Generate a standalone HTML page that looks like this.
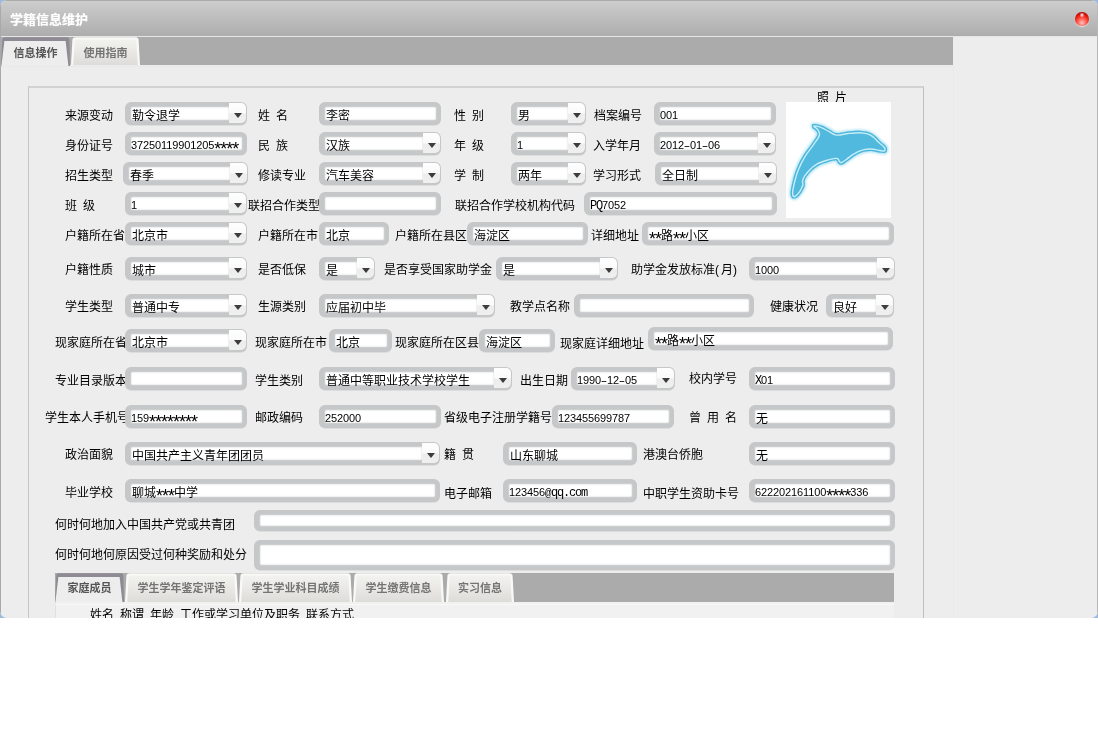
<!DOCTYPE html>
<html lang="zh-CN"><head><meta charset="utf-8"><title>学籍信息维护</title>
<style>
html,body{margin:0;padding:0;background:#fff;}
.lb,.in span,.tab span,#title .t{will-change:transform}
body{width:1098px;height:752px;position:relative;overflow:hidden;font-family:"Liberation Sans", "Noto Sans CJK SC", sans-serif;font-size:12px;color:#000;}
#corner{position:absolute;left:0;top:0;width:1098px;height:618px;background:#9db9dd;}
#win{position:absolute;left:0;top:0;width:1098px;height:618px;background:#ededed;border-radius:7px;overflow:hidden;}
#win:before{content:"";position:absolute;left:0;top:0;width:1px;height:618px;background:#a9a9a9;z-index:5}
#win:after{content:"";position:absolute;right:0;top:0;width:1px;height:618px;background:#b8b8b8;z-index:5}
#title{position:absolute;left:0;top:0;width:1098px;height:36px;background:linear-gradient(#cdcdcd,#adadad);border-top:1px solid #aaa;box-sizing:border-box;}
#title .t{position:absolute;left:10px;top:10px;font-family:"Liberation Sans","Noto Sans CJK SC",sans-serif;font-weight:bold;font-size:13px;line-height:18px;color:#fff;text-shadow:0 0 1px rgba(255,255,255,.55);white-space:nowrap}
#hl{position:absolute;left:0;top:36px;width:1098px;height:1px;background:#e6e6e6}
#close{position:absolute;left:1075px;top:12px;width:13.5px;height:14px;border-radius:50%;background:radial-gradient(circle at 50% 22%,#fff 0,rgba(255,255,255,.0) 20%),radial-gradient(circle at 50% 78%,#ffc0c0 0,#ff4838 42%,#e21a10 62%,#8c0606 100%);box-shadow:0 1px 1px rgba(235,235,235,.8)}
.strip{position:absolute;background:#ababab}
.tab{position:absolute;box-sizing:border-box;font-family:"Liberation Sans","Noto Sans CJK SC",sans-serif;font-weight:bold;font-size:11px;text-align:center;white-space:nowrap;}
.tab.off{color:#747474}
.tab.on{color:#555}
.tab span{position:absolute;left:0;right:0;text-align:center}
.lb{position:absolute;white-space:nowrap;line-height:14px;height:14px;word-spacing:2.67px}
.in{position:absolute;box-sizing:border-box;background:#c5c7c9;border-radius:6px;box-shadow:0 1px 0 -0.2px rgba(197,199,201,.55)}
.in i{position:absolute;left:6px;top:5px;right:5px;bottom:5px;background:#fff;border-radius:1px;box-shadow:0 0 0 1px rgba(208,210,212,.6),inset 0 0 1.5px rgba(150,153,156,.75)}
.in.cb i{right:18px;border-radius:1px 0 0 1px}
.in b{position:absolute;right:1px;top:1px;bottom:2px;width:17px;border-radius:0 5px 5px 0;background:linear-gradient(#fefefe,#fafafa 50%,#ececec 55%,#f0f0f0);font-weight:normal}
.in b:after{content:"";position:absolute;left:5px;top:10px;border-left:4px solid transparent;border-right:4px solid transparent;border-top:5px solid #3c3c3c;}
.in>span{position:absolute;left:7px;top:7px;line-height:14px;height:14px;white-space:nowrap;}
.m{font-family:"Liberation Mono","Noto Sans CJK SC",monospace;letter-spacing:-1.2px;font-size:12px}
.in>span.mm{top:6px;left:6px;font-size:11px}
.d{font-family:"Liberation Sans",sans-serif;letter-spacing:-0.12px}
.a{font-family:"Liberation Sans",sans-serif;font-size:18px;line-height:0;letter-spacing:-1px;position:relative;top:6px}
.a.a2{top:4.5px}
.at{font-family:"Liberation Mono",monospace;font-size:11px;letter-spacing:-0.6px}
.p{letter-spacing:2px}
.h{font-family:"Liberation Sans",sans-serif;display:inline-block;width:6px;text-align:center;transform:scaleX(1.75)}
</style></head><body>
<div id="corner"></div>
<div id="win">
<div id="title"><div class="t">学籍信息维护</div></div>
<div id="hl"></div>
<div id="close"></div>
<div class="strip" style="left:1px;top:37px;width:952px;height:28px"></div>
<div style="position:absolute;left:1px;top:66px;width:953px;height:1px;background:#e6e8ea"></div>
<div style="position:absolute;left:953px;top:65px;width:1px;height:553px;background:#e9e9e9"></div>
<div class="tab on" style="left:1px;top:37px;width:69px;height:29px">
<svg width="70" height="29" style="position:absolute;left:0;top:0"><path d="M0 29 L1.3 2.5 Q1.5 0.3 4 0.3 L66 0.3 Q68.2 0.3 68.4 2.5 L69 29 Z" fill="#8f8b94"/><path d="M0.4 29 L3.4 4 L64.6 4 L67.4 29 Z" fill="#ededed"/></svg>
<span style="top:9px;line-height:14px">信息操作</span></div>
<div class="tab off" style="left:71px;top:37px;width:69px;height:28px">
<svg width="70" height="28" style="position:absolute;left:0;top:0"><defs><linearGradient id="tg1" x1="0" y1="0" x2="0" y2="1"><stop offset="0" stop-color="#f2f2ef"/><stop offset="0.5" stop-color="#e9e8e5"/><stop offset="1" stop-color="#dddcd8"/></linearGradient></defs><path d="M0 28 L1.4 3 Q1.6 0.2 4.5 0.2 L64.5 0.2 Q67.4 0.2 67.6 3 L69 28 Z" fill="#f9f9f7"/><path d="M2.2 28 L3.8 3.4 Q3.9 2.4 5 2.4 L64 2.4 Q65.1 2.4 65.2 3.4 L66.8 28 Z" fill="url(#tg1)"/></svg>
<span style="top:9px;line-height:14px">使用指南</span></div>
<div style="position:absolute;left:28px;top:86px;width:894px;height:600px;border-left:1px solid #c6c6c6;border-top:2px solid #d2d2d2;border-right:1px solid #c0c0c0;box-sizing:content-box"></div>
<div class="lb" style="left:817px;top:91px;">照 片</div>
<div style="position:absolute;left:786px;top:102px;width:105px;height:116px;background:#fff;overflow:hidden">
<svg width="105" height="116" viewBox="0 0 105 116"><defs><filter id="g" x="-20%" y="-20%" width="140%" height="140%"><feGaussianBlur stdDeviation="0.9"/></filter><filter id="g2" x="-20%" y="-20%" width="140%" height="140%"><feGaussianBlur stdDeviation="0.7"/></filter><clipPath id="dc"><path d="M27.0 22.1 C28.6 21.7 32.8 22.5 35.6 23.4 C38.4 24.3 41.4 26.4 43.9 27.7 C46.3 29.0 47.4 30.8 50.5 31.1 C53.5 31.5 58.2 29.9 62.0 29.5 C65.9 29.1 70.2 28.6 73.6 28.7 C76.9 28.8 79.6 29.2 82.1 30.0 C84.7 30.8 86.8 32.1 88.7 33.6 C90.7 35.1 92.3 37.3 94.0 38.9 C95.8 40.6 98.1 42.1 99.3 43.5 C100.5 44.9 101.1 45.9 101.1 47.2 C101.1 48.4 100.6 50.2 99.3 50.8 C98.0 51.3 95.7 50.8 93.4 50.5 C91.0 50.2 87.9 49.0 85.1 49.0 C82.4 48.9 79.6 49.3 76.9 50.1 C74.1 51.0 71.1 52.5 68.6 53.9 C66.1 55.4 64.2 57.2 62.0 58.7 C59.9 60.2 57.4 62.2 55.7 62.7 C54.1 63.1 53.0 62.1 52.1 61.3 C51.2 60.6 51.8 58.6 50.1 58.4 C48.5 58.2 45.2 59.1 42.2 60.0 C39.2 60.9 35.3 62.0 32.3 63.7 C29.3 65.4 26.3 67.9 24.1 70.3 C21.8 72.7 19.7 75.8 18.8 78.0 C17.9 80.2 19.3 81.4 18.8 83.5 C18.2 85.5 16.8 88.3 15.5 90.4 C14.1 92.5 12.1 94.9 10.5 95.8 C9.0 96.8 7.2 96.9 6.2 96.0 C5.2 95.1 4.5 93.6 4.6 90.7 C4.7 87.8 5.9 82.5 6.9 78.5 C7.9 74.5 8.8 71.1 10.5 67.0 C12.2 62.8 14.6 57.9 17.1 53.8 C19.6 49.6 23.0 45.6 25.4 42.2 C27.7 38.8 30.5 35.5 31.3 33.3 C32.1 31.0 30.8 29.9 30.0 28.7 C29.2 27.4 26.9 26.8 26.4 25.7 C25.9 24.6 25.5 22.5 27.0 22.1Z"/></clipPath></defs>
<path d="M27.0 22.1 C28.6 21.7 32.8 22.5 35.6 23.4 C38.4 24.3 41.4 26.4 43.9 27.7 C46.3 29.0 47.4 30.8 50.5 31.1 C53.5 31.5 58.2 29.9 62.0 29.5 C65.9 29.1 70.2 28.6 73.6 28.7 C76.9 28.8 79.6 29.2 82.1 30.0 C84.7 30.8 86.8 32.1 88.7 33.6 C90.7 35.1 92.3 37.3 94.0 38.9 C95.8 40.6 98.1 42.1 99.3 43.5 C100.5 44.9 101.1 45.9 101.1 47.2 C101.1 48.4 100.6 50.2 99.3 50.8 C98.0 51.3 95.7 50.8 93.4 50.5 C91.0 50.2 87.9 49.0 85.1 49.0 C82.4 48.9 79.6 49.3 76.9 50.1 C74.1 51.0 71.1 52.5 68.6 53.9 C66.1 55.4 64.2 57.2 62.0 58.7 C59.9 60.2 57.4 62.2 55.7 62.7 C54.1 63.1 53.0 62.1 52.1 61.3 C51.2 60.6 51.8 58.6 50.1 58.4 C48.5 58.2 45.2 59.1 42.2 60.0 C39.2 60.9 35.3 62.0 32.3 63.7 C29.3 65.4 26.3 67.9 24.1 70.3 C21.8 72.7 19.7 75.8 18.8 78.0 C17.9 80.2 19.3 81.4 18.8 83.5 C18.2 85.5 16.8 88.3 15.5 90.4 C14.1 92.5 12.1 94.9 10.5 95.8 C9.0 96.8 7.2 96.9 6.2 96.0 C5.2 95.1 4.5 93.6 4.6 90.7 C4.7 87.8 5.9 82.5 6.9 78.5 C7.9 74.5 8.8 71.1 10.5 67.0 C12.2 62.8 14.6 57.9 17.1 53.8 C19.6 49.6 23.0 45.6 25.4 42.2 C27.7 38.8 30.5 35.5 31.3 33.3 C32.1 31.0 30.8 29.9 30.0 28.7 C29.2 27.4 26.9 26.8 26.4 25.7 C25.9 24.6 25.5 22.5 27.0 22.1Z" fill="#9fdcf0" stroke="#b4e4f4" stroke-width="3" stroke-linejoin="round" filter="url(#g)"/>
<path d="M27.0 22.1 C28.6 21.7 32.8 22.5 35.6 23.4 C38.4 24.3 41.4 26.4 43.9 27.7 C46.3 29.0 47.4 30.8 50.5 31.1 C53.5 31.5 58.2 29.9 62.0 29.5 C65.9 29.1 70.2 28.6 73.6 28.7 C76.9 28.8 79.6 29.2 82.1 30.0 C84.7 30.8 86.8 32.1 88.7 33.6 C90.7 35.1 92.3 37.3 94.0 38.9 C95.8 40.6 98.1 42.1 99.3 43.5 C100.5 44.9 101.1 45.9 101.1 47.2 C101.1 48.4 100.6 50.2 99.3 50.8 C98.0 51.3 95.7 50.8 93.4 50.5 C91.0 50.2 87.9 49.0 85.1 49.0 C82.4 48.9 79.6 49.3 76.9 50.1 C74.1 51.0 71.1 52.5 68.6 53.9 C66.1 55.4 64.2 57.2 62.0 58.7 C59.9 60.2 57.4 62.2 55.7 62.7 C54.1 63.1 53.0 62.1 52.1 61.3 C51.2 60.6 51.8 58.6 50.1 58.4 C48.5 58.2 45.2 59.1 42.2 60.0 C39.2 60.9 35.3 62.0 32.3 63.7 C29.3 65.4 26.3 67.9 24.1 70.3 C21.8 72.7 19.7 75.8 18.8 78.0 C17.9 80.2 19.3 81.4 18.8 83.5 C18.2 85.5 16.8 88.3 15.5 90.4 C14.1 92.5 12.1 94.9 10.5 95.8 C9.0 96.8 7.2 96.9 6.2 96.0 C5.2 95.1 4.5 93.6 4.6 90.7 C4.7 87.8 5.9 82.5 6.9 78.5 C7.9 74.5 8.8 71.1 10.5 67.0 C12.2 62.8 14.6 57.9 17.1 53.8 C19.6 49.6 23.0 45.6 25.4 42.2 C27.7 38.8 30.5 35.5 31.3 33.3 C32.1 31.0 30.8 29.9 30.0 28.7 C29.2 27.4 26.9 26.8 26.4 25.7 C25.9 24.6 25.5 22.5 27.0 22.1Z" fill="#50b9dd"/>
<g clip-path="url(#dc)"><path d="M27.0 22.1 C28.6 21.7 32.8 22.5 35.6 23.4 C38.4 24.3 41.4 26.4 43.9 27.7 C46.3 29.0 47.4 30.8 50.5 31.1 C53.5 31.5 58.2 29.9 62.0 29.5 C65.9 29.1 70.2 28.6 73.6 28.7 C76.9 28.8 79.6 29.2 82.1 30.0 C84.7 30.8 86.8 32.1 88.7 33.6 C90.7 35.1 92.3 37.3 94.0 38.9 C95.8 40.6 98.1 42.1 99.3 43.5 C100.5 44.9 101.1 45.9 101.1 47.2 C101.1 48.4 100.6 50.2 99.3 50.8 C98.0 51.3 95.7 50.8 93.4 50.5 C91.0 50.2 87.9 49.0 85.1 49.0 C82.4 48.9 79.6 49.3 76.9 50.1 C74.1 51.0 71.1 52.5 68.6 53.9 C66.1 55.4 64.2 57.2 62.0 58.7 C59.9 60.2 57.4 62.2 55.7 62.7 C54.1 63.1 53.0 62.1 52.1 61.3 C51.2 60.6 51.8 58.6 50.1 58.4 C48.5 58.2 45.2 59.1 42.2 60.0 C39.2 60.9 35.3 62.0 32.3 63.7 C29.3 65.4 26.3 67.9 24.1 70.3 C21.8 72.7 19.7 75.8 18.8 78.0 C17.9 80.2 19.3 81.4 18.8 83.5 C18.2 85.5 16.8 88.3 15.5 90.4 C14.1 92.5 12.1 94.9 10.5 95.8 C9.0 96.8 7.2 96.9 6.2 96.0 C5.2 95.1 4.5 93.6 4.6 90.7 C4.7 87.8 5.9 82.5 6.9 78.5 C7.9 74.5 8.8 71.1 10.5 67.0 C12.2 62.8 14.6 57.9 17.1 53.8 C19.6 49.6 23.0 45.6 25.4 42.2 C27.7 38.8 30.5 35.5 31.3 33.3 C32.1 31.0 30.8 29.9 30.0 28.7 C29.2 27.4 26.9 26.8 26.4 25.7 C25.9 24.6 25.5 22.5 27.0 22.1Z" fill="none" stroke="#c8eef9" stroke-width="5.4" stroke-linejoin="round" filter="url(#g2)"/><path d="M27.0 22.1 C28.6 21.7 32.8 22.5 35.6 23.4 C38.4 24.3 41.4 26.4 43.9 27.7 C46.3 29.0 47.4 30.8 50.5 31.1 C53.5 31.5 58.2 29.9 62.0 29.5 C65.9 29.1 70.2 28.6 73.6 28.7 C76.9 28.8 79.6 29.2 82.1 30.0 C84.7 30.8 86.8 32.1 88.7 33.6 C90.7 35.1 92.3 37.3 94.0 38.9 C95.8 40.6 98.1 42.1 99.3 43.5 C100.5 44.9 101.1 45.9 101.1 47.2 C101.1 48.4 100.6 50.2 99.3 50.8 C98.0 51.3 95.7 50.8 93.4 50.5 C91.0 50.2 87.9 49.0 85.1 49.0 C82.4 48.9 79.6 49.3 76.9 50.1 C74.1 51.0 71.1 52.5 68.6 53.9 C66.1 55.4 64.2 57.2 62.0 58.7 C59.9 60.2 57.4 62.2 55.7 62.7 C54.1 63.1 53.0 62.1 52.1 61.3 C51.2 60.6 51.8 58.6 50.1 58.4 C48.5 58.2 45.2 59.1 42.2 60.0 C39.2 60.9 35.3 62.0 32.3 63.7 C29.3 65.4 26.3 67.9 24.1 70.3 C21.8 72.7 19.7 75.8 18.8 78.0 C17.9 80.2 19.3 81.4 18.8 83.5 C18.2 85.5 16.8 88.3 15.5 90.4 C14.1 92.5 12.1 94.9 10.5 95.8 C9.0 96.8 7.2 96.9 6.2 96.0 C5.2 95.1 4.5 93.6 4.6 90.7 C4.7 87.8 5.9 82.5 6.9 78.5 C7.9 74.5 8.8 71.1 10.5 67.0 C12.2 62.8 14.6 57.9 17.1 53.8 C19.6 49.6 23.0 45.6 25.4 42.2 C27.7 38.8 30.5 35.5 31.3 33.3 C32.1 31.0 30.8 29.9 30.0 28.7 C29.2 27.4 26.9 26.8 26.4 25.7 C25.9 24.6 25.5 22.5 27.0 22.1Z" fill="none" stroke="#48b4da" stroke-width="2.6" stroke-linejoin="round"/></g>
</svg></div>
<div class="lb" style="left:64.5px;top:109px;">来源变动</div>
<div class="in cb" style="left:125px;top:102px;width:122px;height:23px"><i></i><b></b><span>勒令退学</span></div>
<div class="lb" style="left:257.5px;top:109px;">姓 名</div>
<div class="in" style="left:319px;top:102px;width:122px;height:23px"><i></i><span>李密</span></div>
<div class="lb" style="left:453.5px;top:109px;">性 别</div>
<div class="in cb" style="left:511px;top:102px;width:75px;height:23px"><i></i><b></b><span>男</span></div>
<div class="lb" style="left:593.5px;top:109px;">档案编号</div>
<div class="in" style="left:654px;top:102px;width:122px;height:23px"><i></i><span class="mm"><span class="d">001</span></span></div>
<div class="lb" style="left:64.5px;top:139px;">身份证号</div>
<div class="in" style="left:125px;top:132px;width:122px;height:23px"><i></i><span class="mm"><span class="d">37250119901205</span><span class="a">****</span></span></div>
<div class="lb" style="left:257.5px;top:139px;">民 族</div>
<div class="in cb" style="left:319px;top:132px;width:122px;height:23px"><i></i><b></b><span>汉族</span></div>
<div class="lb" style="left:453.5px;top:139px;">年 级</div>
<div class="in cb" style="left:511px;top:132px;width:75px;height:23px"><i></i><b></b><span class="mm"><span class="d">1</span></span></div>
<div class="lb" style="left:592.5px;top:139px;">入学年月</div>
<div class="in cb" style="left:654px;top:132px;width:122px;height:23px"><i></i><b></b><span class="mm"><span class="d">2012</span><span class="h">-</span><span class="d">01</span><span class="h">-</span><span class="d">06</span></span></div>
<div class="lb" style="left:64.5px;top:169px;">招生类型</div>
<div class="in cb" style="left:123px;top:162px;width:125px;height:23px"><i></i><b></b><span>春季</span></div>
<div class="lb" style="left:257.5px;top:169px;">修读专业</div>
<div class="in cb" style="left:319px;top:162px;width:122px;height:23px"><i></i><b></b><span>汽车美容</span></div>
<div class="lb" style="left:453.5px;top:169px;">学 制</div>
<div class="in cb" style="left:511px;top:162px;width:75px;height:23px"><i></i><b></b><span>两年</span></div>
<div class="lb" style="left:592.5px;top:169px;">学习形式</div>
<div class="in cb" style="left:655px;top:162px;width:122px;height:23px"><i></i><b></b><span>全日制</span></div>
<div class="lb" style="left:64.5px;top:199px;">班 级</div>
<div class="in cb" style="left:125px;top:192px;width:122px;height:23px"><i></i><b></b><span class="mm"><span class="d">1</span></span></div>
<div class="lb" style="left:247.5px;top:199px;">联招合作类型</div>
<div class="in" style="left:319px;top:192px;width:122px;height:23px"><i></i></div>
<div class="lb" style="left:455px;top:199px;">联招合作学校机构代码</div>
<div class="in" style="left:584px;top:192px;width:193px;height:23px"><i></i><span class="mm"><span class="m">PQ</span><span class="d">7052</span></span></div>
<div class="lb" style="left:64.5px;top:229px;">户籍所在省</div>
<div class="in cb" style="left:125px;top:222px;width:122px;height:23px"><i></i><b></b><span>北京市</span></div>
<div class="lb" style="left:257.5px;top:229px;">户籍所在市</div>
<div class="in" style="left:319px;top:222px;width:70px;height:23px"><i></i><span>北京</span></div>
<div class="lb" style="left:395px;top:229px;">户籍所在县区</div>
<div class="in" style="left:467px;top:222px;width:121px;height:23px"><i></i><span>海淀区</span></div>
<div class="lb" style="left:590.5px;top:229px;">详细地址</div>
<div class="in" style="left:642px;top:222px;width:252px;height:23px"><i></i><span><span class="a a2">**</span>路<span class="a a2">**</span>小区</span></div>
<div class="lb" style="left:64.5px;top:263px;">户籍性质</div>
<div class="in cb" style="left:125px;top:257px;width:122px;height:23px"><i></i><b></b><span>城市</span></div>
<div class="lb" style="left:257.5px;top:263px;">是否低保</div>
<div class="in cb" style="left:319px;top:257px;width:56px;height:23px"><i></i><b></b><span>是</span></div>
<div class="lb" style="left:383.5px;top:263px;">是否享受国家助学金</div>
<div class="in cb" style="left:496px;top:257px;width:122px;height:23px"><i></i><b></b><span>是</span></div>
<div class="lb" style="left:630.5px;top:263px;">助学金发放标准<span class="p">(</span>月<span class="p">)</span></div>
<div class="in cb" style="left:749px;top:257px;width:146px;height:23px"><i></i><b></b><span class="mm"><span class="d">1000</span></span></div>
<div class="lb" style="left:64.5px;top:300px;">学生类型</div>
<div class="in cb" style="left:125px;top:294px;width:122px;height:23px"><i></i><b></b><span>普通中专</span></div>
<div class="lb" style="left:257.5px;top:300px;">生源类别</div>
<div class="in cb" style="left:319px;top:294px;width:176px;height:23px"><i></i><b></b><span>应届初中毕</span></div>
<div class="lb" style="left:509.5px;top:300px;">教学点名称</div>
<div class="in" style="left:574px;top:294px;width:180px;height:23px"><i></i></div>
<div class="lb" style="left:769.5px;top:300px;">健康状况</div>
<div class="in cb" style="left:826px;top:294px;width:68px;height:23px"><i></i><b></b><span>良好</span></div>
<div class="lb" style="left:54.5px;top:336px;">现家庭所在省</div>
<div class="in cb" style="left:125px;top:329px;width:122px;height:23px"><i></i><b></b><span>北京市</span></div>
<div class="lb" style="left:254.5px;top:336px;">现家庭所在市</div>
<div class="in" style="left:329px;top:329px;width:63px;height:23px"><i></i><span>北京</span></div>
<div class="lb" style="left:395px;top:336px;">现家庭所在区县</div>
<div class="in" style="left:479px;top:329px;width:76px;height:23px"><i></i><span>海淀区</span></div>
<div class="lb" style="left:560px;top:337px;">现家庭详细地址</div>
<div class="in" style="left:648px;top:327px;width:245px;height:23px"><i></i><span><span class="a a2">**</span>路<span class="a a2">**</span>小区</span></div>
<div class="lb" style="left:54.5px;top:374px;">专业目录版本</div>
<div class="in" style="left:125px;top:367px;width:122px;height:23px"><i></i></div>
<div class="lb" style="left:254.5px;top:374px;">学生类别</div>
<div class="in cb" style="left:319px;top:367px;width:193px;height:23px"><i></i><b></b><span>普通中等职业技术学校学生</span></div>
<div class="lb" style="left:520px;top:374px;">出生日期</div>
<div class="in cb" style="left:571px;top:367px;width:104px;height:23px"><i></i><b></b><span class="mm"><span class="d">1990</span><span class="h">-</span><span class="d">12</span><span class="h">-</span><span class="d">05</span></span></div>
<div class="lb" style="left:688.5px;top:372px;">校内学号</div>
<div class="in" style="left:749px;top:367px;width:146px;height:23px"><i></i><span class="mm"><span class="m">X</span><span class="d">01</span></span></div>
<div class="lb" style="left:44.5px;top:411px;">学生本人手机号</div>
<div class="in" style="left:125px;top:405px;width:122px;height:23px"><i></i><span class="mm"><span class="d">159</span><span class="a">********</span></span></div>
<div class="lb" style="left:254.5px;top:411px;">邮政编码</div>
<div class="in" style="left:319px;top:405px;width:122px;height:23px"><i></i><span class="mm"><span class="d">252000</span></span></div>
<div class="lb" style="left:443.5px;top:411px;">省级电子注册学籍号</div>
<div class="in" style="left:552px;top:405px;width:122px;height:23px"><i></i><span class="mm"><span class="d">123455699787</span></span></div>
<div class="lb" style="left:688.5px;top:411px;">曾 用 名</div>
<div class="in" style="left:749px;top:405px;width:146px;height:23px"><i></i><span>无</span></div>
<div class="lb" style="left:64.5px;top:448px;">政治面貌</div>
<div class="in cb" style="left:125px;top:442px;width:315px;height:23px"><i></i><b></b><span>中国共产主义青年团团员</span></div>
<div class="lb" style="left:443.5px;top:448px;">籍 贯</div>
<div class="in" style="left:503px;top:442px;width:134px;height:23px"><i></i><span>山东聊城</span></div>
<div class="lb" style="left:642.5px;top:448px;">港澳台侨胞</div>
<div class="in" style="left:749px;top:442px;width:146px;height:23px"><i></i><span>无</span></div>
<div class="lb" style="left:64.5px;top:486px;">毕业学校</div>
<div class="in" style="left:125px;top:479px;width:315px;height:23px"><i></i><span>聊城<span class="a a2">***</span>中学</span></div>
<div class="lb" style="left:443.5px;top:487px;">电子邮箱</div>
<div class="in" style="left:503px;top:479px;width:134px;height:23px"><i></i><span class="mm"><span class="d">123456</span><span class="at">@</span><span class="m">qq.com</span></span></div>
<div class="lb" style="left:643px;top:487px;">中职学生资助卡号</div>
<div class="in" style="left:749px;top:479px;width:146px;height:23px"><i></i><span class="mm"><span class="d">622202161100</span><span class="a">****</span><span class="d">336</span></span></div>
<div class="lb" style="left:54.5px;top:518px;">何时何地加入中国共产党或共青团</div>
<div class="in" style="left:254px;top:510px;width:641px;height:21px"><i></i></div>
<div class="lb" style="left:54.5px;top:548px;">何时何地何原因受过何种奖励和处分</div>
<div class="in" style="left:254px;top:540px;width:641px;height:30px"><i></i></div>
<div class="strip" style="left:55px;top:573px;width:839px;height:29px"></div>
<div style="position:absolute;left:55px;top:602px;width:839px;height:20px;background:#f1f1f1;border-left:1px solid #e0e0e0;box-sizing:border-box"></div>
<div style="position:absolute;left:55px;top:604px;width:839px;height:1px;background:#f8f8f8"></div>
<div class="tab on" style="left:55px;top:573px;width:69px;height:29px">
<svg width="70" height="29" style="position:absolute;left:0;top:0"><path d="M0 29 L1.3 2.5 Q1.5 0.3 4 0.3 L66 0.3 Q68.2 0.3 68.4 2.5 L69 29 Z" fill="#8f8b94"/><path d="M0.4 29 L3.4 4 L64.6 4 L67.4 29 Z" fill="#ededed"/></svg>
<span style="top:8px;line-height:14px">家庭成员</span></div>
<div class="tab off" style="left:125px;top:573px;width:113px;height:29px">
<svg width="114" height="29" style="position:absolute;left:0;top:0"><defs><linearGradient id="tg2" x1="0" y1="0" x2="0" y2="1"><stop offset="0" stop-color="#f2f2ef"/><stop offset="0.5" stop-color="#e9e8e5"/><stop offset="1" stop-color="#dddcd8"/></linearGradient></defs><path d="M0 29 L1.4 3 Q1.6 0.2 4.5 0.2 L108.5 0.2 Q111.4 0.2 111.6 3 L113 29 Z" fill="#f9f9f7"/><path d="M2.2 29 L3.8 3.4 Q3.9 2.4 5 2.4 L108 2.4 Q109.1 2.4 109.2 3.4 L110.8 29 Z" fill="url(#tg2)"/></svg>
<span style="top:8px;line-height:14px">学生学年鉴定评语</span></div>
<div class="tab off" style="left:239px;top:573px;width:113px;height:29px">
<svg width="114" height="29" style="position:absolute;left:0;top:0"><defs><linearGradient id="tg3" x1="0" y1="0" x2="0" y2="1"><stop offset="0" stop-color="#f2f2ef"/><stop offset="0.5" stop-color="#e9e8e5"/><stop offset="1" stop-color="#dddcd8"/></linearGradient></defs><path d="M0 29 L1.4 3 Q1.6 0.2 4.5 0.2 L108.5 0.2 Q111.4 0.2 111.6 3 L113 29 Z" fill="#f9f9f7"/><path d="M2.2 29 L3.8 3.4 Q3.9 2.4 5 2.4 L108 2.4 Q109.1 2.4 109.2 3.4 L110.8 29 Z" fill="url(#tg3)"/></svg>
<span style="top:8px;line-height:14px">学生学业科目成绩</span></div>
<div class="tab off" style="left:353px;top:573px;width:91px;height:29px">
<svg width="92" height="29" style="position:absolute;left:0;top:0"><defs><linearGradient id="tg4" x1="0" y1="0" x2="0" y2="1"><stop offset="0" stop-color="#f2f2ef"/><stop offset="0.5" stop-color="#e9e8e5"/><stop offset="1" stop-color="#dddcd8"/></linearGradient></defs><path d="M0 29 L1.4 3 Q1.6 0.2 4.5 0.2 L86.5 0.2 Q89.4 0.2 89.6 3 L91 29 Z" fill="#f9f9f7"/><path d="M2.2 29 L3.8 3.4 Q3.9 2.4 5 2.4 L86 2.4 Q87.1 2.4 87.2 3.4 L88.8 29 Z" fill="url(#tg4)"/></svg>
<span style="top:8px;line-height:14px">学生缴费信息</span></div>
<div class="tab off" style="left:446px;top:573px;width:68px;height:29px">
<svg width="69" height="29" style="position:absolute;left:0;top:0"><defs><linearGradient id="tg5" x1="0" y1="0" x2="0" y2="1"><stop offset="0" stop-color="#f2f2ef"/><stop offset="0.5" stop-color="#e9e8e5"/><stop offset="1" stop-color="#dddcd8"/></linearGradient></defs><path d="M0 29 L1.4 3 Q1.6 0.2 4.5 0.2 L63.5 0.2 Q66.4 0.2 66.6 3 L68 29 Z" fill="#f9f9f7"/><path d="M2.2 29 L3.8 3.4 Q3.9 2.4 5 2.4 L63 2.4 Q64.1 2.4 64.2 3.4 L65.8 29 Z" fill="url(#tg5)"/></svg>
<span style="top:8px;line-height:14px">实习信息</span></div>
<div class="lb" style="left:90px;top:608px;">姓名 称谓 年龄 工作或学习单位及职务 联系方式</div>
</div>
</body></html>
